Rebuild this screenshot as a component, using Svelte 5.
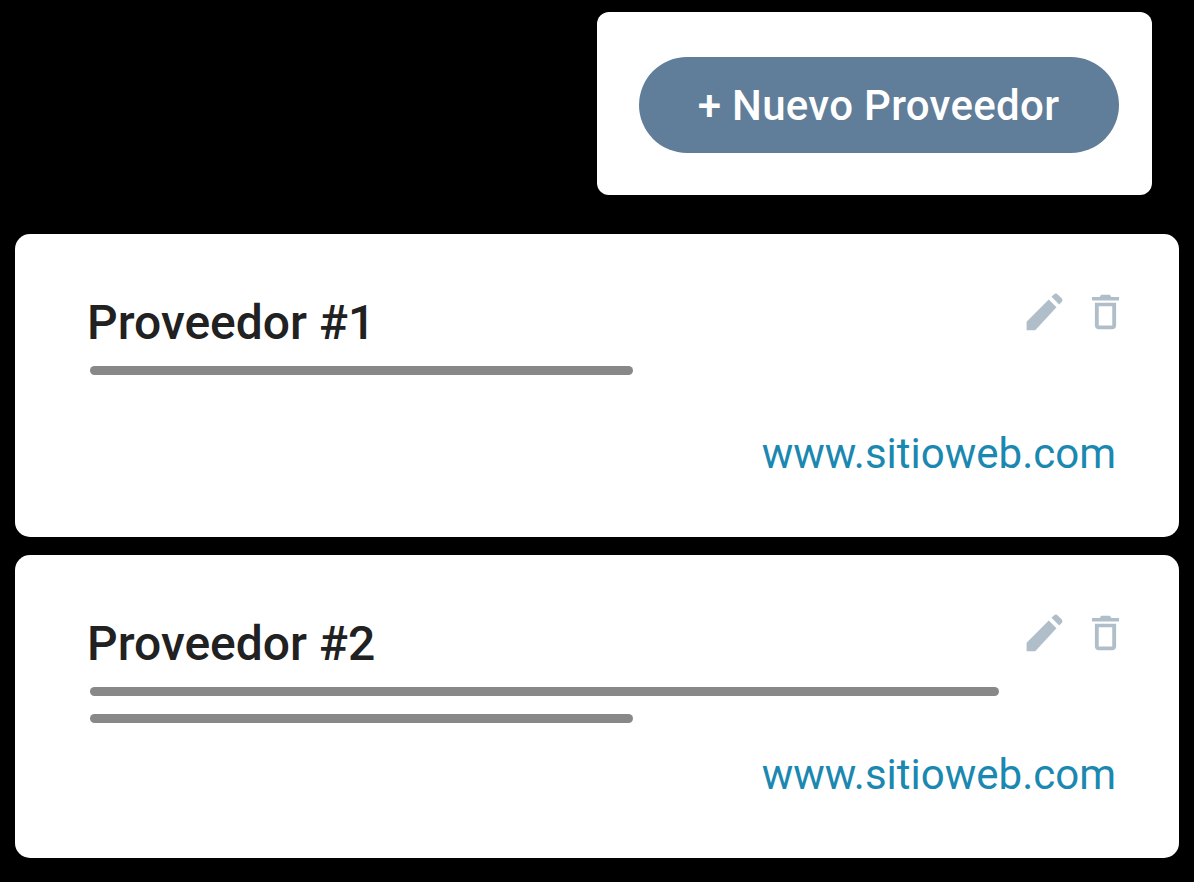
<script>
  // each provider has its own placeholder description lines (width in px)
  const providers = [
    { name: 'Proveedor #1', lines: [543] },
    { name: 'Proveedor #2', lines: [909, 543] }
  ];
</script>

<div class="page">
  <div class="toolbar">
    <button class="add-btn">+ Nuevo Proveedor</button>
  </div>

  {#each providers as provider}
    <div class="card">
      <div class="card-head">
        <h2>{provider.name}</h2>
        <div class="actions">
          <svg class="edit" viewBox="0 0 24 24" aria-hidden="true">
            <path d="M2.500 22v-4.700L14.600 5.200l4.200 4.200L7.200 22H2.500zM16.100 3.700l1.300-1.300c.6-.6 1.500-.6 2.100 0l2.100 2.100c.6.6.6 1.500 0 2.100l-1.300 1.300-4.200-4.200z" />
          </svg>
          <svg class="trash" viewBox="0 0 28 36" aria-hidden="true">
            <path d="M9.500 0h9l1.500 2.500h8v3.500H0V2.500h8L9.500 0z" />
            <path fill-rule="evenodd" d="M3 8.500h22V32c0 2.200-1.800 4-4 4H7c-2.200 0-4-1.800-4-4V8.500zM7 12V32h14V12H7z" />
          </svg>
        </div>
      </div>
      <div class="lines">
        {#each provider.lines as width}
          <div class="line" style="width: {width}px"></div>
        {/each}
      </div>
      <a class="site" href="#top">www.sitioweb.com</a>
    </div>
  {/each}
</div>

<style>
  :global(body) {
    margin: 0;
    background: #000;
  }
  .page {
    display: flex;
    flex-direction: column;
    width: 1194px;
    height: 882px;
    box-sizing: border-box;
    padding: 12px 15px 0;
    font-family: Roboto, sans-serif;
  }
  .toolbar {
    align-self: flex-end;
    display: flex;
    justify-content: center;
    box-sizing: border-box;
    width: 555px;
    height: 183px;
    margin-right: 27px;
    margin-bottom: 39px;
    padding-top: 45px;
    padding-left: 8px;
    background: #fff;
    border-radius: 12px;
  }
  .add-btn {
    width: 480px;
    height: 96px;
    border: none;
    border-radius: 48px;
    background: #607d99;
    color: #fff;
    font-family: inherit;
    font-size: 42px;
    font-weight: 500;
    letter-spacing: 0.3px;
  }
  .card {
    display: flex;
    flex-direction: column;
    box-sizing: border-box;
    height: 303px;
    margin-bottom: 18px;
    padding: 60px 63px 60px 73px;
    background: #fff;
    border-radius: 15px;
  }
  .card-head {
    display: flex;
    justify-content: space-between;
    align-items: flex-start;
  }
  h2 {
    margin: 1px 0 -1px -1px;
    font-size: 48px;
    font-weight: 500;
    line-height: 56px;
    color: #212121;
  }
  .actions {
    display: flex;
    align-items: flex-start;
    gap: 26px;
    margin-right: -3px;
  }
  .actions svg {
    display: block;
    fill: #b0bec9;
  }
  .edit {
    width: 44px;
    height: 44px;
    margin-top: -4px;
  }
  .trash {
    width: 27px;
    height: 36px;
  }
  .lines {
    display: flex;
    flex-direction: column;
    gap: 18px;
    margin-top: 16px;
    padding-left: 2px;
  }
  .line {
    height: 9px;
    border-radius: 5px;
    background: #888;
  }
  .site {
    margin-top: auto;
    align-self: flex-end;
    font-size: 42px;
    line-height: 46px;
    color: #1a88b0;
    text-decoration: none;
  }
</style>
